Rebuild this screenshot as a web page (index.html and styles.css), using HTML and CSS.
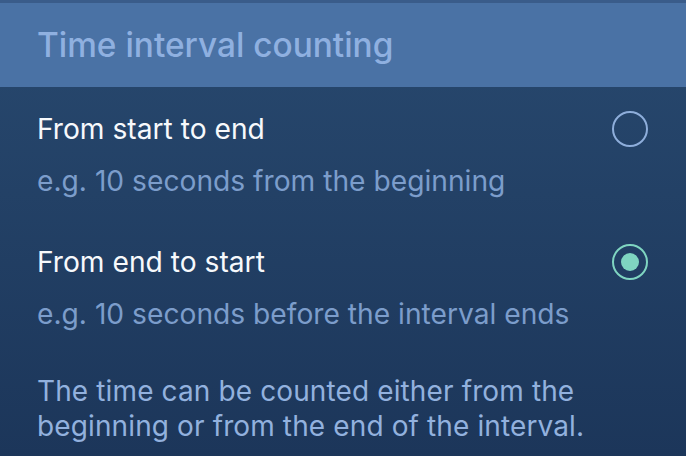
FILE: index.html
```html
<!DOCTYPE html>
<html lang="en">

<head>
    <meta charset="UTF-8">
    <meta name="viewport" content="width=device-width, initial-scale=1.0">
    <title>Time interval counting</title>
    <link rel="stylesheet" href="styles.css">
</head>

<body>
    <div class="settings">

        <div class="section-header">
            <h1>Time interval counting</h1>
        </div>

        <div class="option-list">
            <div class="option">
                <div class="option-text">
                    <p class="option-title">From start to end</p>
                    <p class="option-hint">e.g. 10 seconds from the beginning</p>
                </div>
                <span class="radio"></span>
            </div>
            <div class="option">
                <div class="option-text">
                    <p class="option-title">From end to start</p>
                    <p class="option-hint">e.g. 10 seconds before the interval ends</p>
                </div>
                <span class="radio checked"></span>
            </div>
        </div>

        <p class="footnote">The time can be counted either from the beginning or from the end of the interval.</p>
    </div>
</body>

</html>
```

FILE: styles.css
```css
body {
    margin: 0;
    height: 100vh;
    background: linear-gradient(#28496f, #1c365a);
    font-family: Inter, 'Noto Sans', sans-serif;
    overflow: hidden;
}

.settings {
    display: flex;
    flex-direction: column;
    border-top: 3px solid #3a5c8a;
}

.section-header {
    background: #4a72a5;
    height: 84px;
    display: flex;
    align-items: center;
    padding: 0 37px;
}

.section-header h1 {
    margin: 0;
    font-size: 33.4px;
    font-weight: 500;
    color: #8fb0e0;
}

.option-list {
    display: flex;
    flex-direction: column;
}

.option {
    display: flex;
    align-items: flex-start;
    justify-content: space-between;
    padding: 25px 38px 22px 37px;
}

.option-text p {
    margin: 0;
    font-size: 28.2px;
    line-height: 34px;
}

.option-title {
    color: #f7f9fc;
}

.option-text .option-hint {
    margin-top: 18px;
    color: #7c9dcb;
}

.radio {
    width: 36px;
    height: 36px;
    border: 2.7px solid #8eaedb;
    border-radius: 50%;
    margin-top: -1px;
    box-sizing: border-box;
    display: flex;
    align-items: center;
    justify-content: center;
}

.radio.checked {
    border-color: #7fd5c1;
}

.radio.checked::after {
    content: '';
    width: 18px;
    height: 18px;
    border-radius: 50%;
    background: #7fd5c1;
}

.footnote {
    margin: 21px 0 0;
    padding: 0 80px 0 37px;
    font-size: 28px;
    line-height: 35px;
    letter-spacing: 0.12px;
    color: #92b1de;
}
```
